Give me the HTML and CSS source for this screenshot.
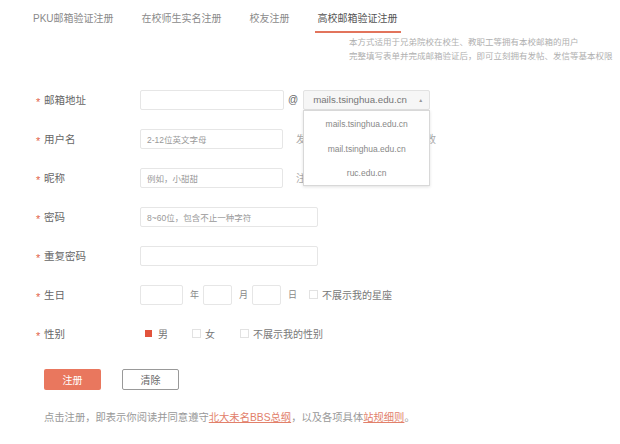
FILE: index.html
```html
<!DOCTYPE html>
<html lang="zh-CN">
<head>
<meta charset="utf-8">
<title>注册</title>
<link rel="stylesheet" href="styles.css">
</head>
<body>
<div class="page">
  <nav class="tabs">
    <span class="tab">PKU邮箱验证注册</span>
    <span class="tab">在校师生实名注册</span>
    <span class="tab">校友注册</span>
    <span class="tab active">高校邮箱验证注册</span>
  </nav>
  <div class="notice">
    <div>本方式适用于兄弟院校在校生、教职工等拥有本校邮箱的用户</div>
    <div>完整填写表单并完成邮箱验证后，即可立刻拥有发帖、发信等基本权限</div>
  </div>

  <form class="form">
    <div class="row">
      <label class="label"><span class="star">*</span>邮箱地址</label>
      <span class="input w144"></span>
      <span class="at">@</span>
      <div class="select">
        <span class="select-value">mails.tsinghua.edu.cn</span>
        <span class="caret">▲</span>
        <div class="menu">
          <div class="menu-item">mails.tsinghua.edu.cn</div>
          <div class="menu-item">mail.tsinghua.edu.cn</div>
          <div class="menu-item">ruc.edu.cn</div>
        </div>
      </div>
    </div>
    <div class="row">
      <label class="label"><span class="star">*</span>用户名</label>
      <span class="input w143"><span class="ph">2-12位英文字母</span></span>
      <span class="hint">发帖时显示的用户名，不可更改</span>
    </div>
    <div class="row">
      <label class="label"><span class="star">*</span>昵称</label>
      <span class="input w143"><span class="ph">例如，小甜甜</span></span>
      <span class="hint">注册后可以随时修改</span>
    </div>
    <div class="row">
      <label class="label"><span class="star">*</span>密码</label>
      <span class="input w178"><span class="ph">8~60位，包含不止一种字符</span></span>
    </div>
    <div class="row">
      <label class="label"><span class="star">*</span>重复密码</label>
      <span class="input w178"></span>
    </div>
    <div class="row">
      <label class="label"><span class="star">*</span>生日</label>
      <span class="input w43"></span><span class="unit">年</span>
      <span class="input w29"></span><span class="unit">月</span>
      <span class="input w29"></span><span class="unit">日</span>
      <span class="check"><span class="box"></span>不展示我的星座</span>
    </div>
    <div class="row">
      <label class="label"><span class="star">*</span>性别</label>
      <div class="gender">
        <span class="opt"><span class="box on"></span>男</span>
        <span class="opt"><span class="box"></span>女</span>
        <span class="opt"><span class="box"></span>不展示我的性别</span>
      </div>
    </div>
    <div class="buttons">
      <span class="btn primary">注册</span>
      <span class="btn plain">清除</span>
    </div>
  </form>

  <p class="footer">点击注册，即表示你阅读并同意遵守<a class="link">北大未名BBS总纲</a>，以及各项具体<a class="link">站规细则</a>。</p>
</div>
</body>
</html>
```

FILE: styles.css
```css
html, body {
  margin: 0;
  padding: 0;
  background: #fff;
}
body {
  font-family: "Liberation Sans", "Noto Sans CJK SC", sans-serif;
  color: #666;
}
.page {
  width: 620px;
  height: 444px;
  overflow: hidden;
}
.tabs {
  display: flex;
  gap: 22px;
  padding: 12px 0 0 30px;
  height: 21px;
}
.tab {
  font-size: 10px;
  line-height: 14px;
  height: 14px;
  padding: 0 3px 5px;
  color: #8a8a8a;
  white-space: nowrap;
}
.tab.active {
  color: #555;
  border-bottom: 2px solid #e2745c;
}
.notice {
  margin: 2px 0 0 349px;
  font-size: 8.5px;
  line-height: 14px;
  color: #b0b0b0;
  white-space: nowrap;
}
.form {
  margin-top: 17px;
}
.row {
  display: flex;
  align-items: center;
  height: 39px;
}
.label {
  width: 104px;
  padding-left: 36px;
  font-size: 10.5px;
  color: #666;
  display: flex;
  align-items: center;
  white-space: nowrap;
}
.star {
  width: 8px;
  color: #e2644a;
  font-size: 11px;
  line-height: 10px;
  transform: translateY(2px);
}
.input {
  box-sizing: border-box;
  height: 20px;
  border: 1px solid #e6e6e6;
  border-radius: 2px;
  display: flex;
  align-items: center;
  padding-left: 6px;
  background: #fff;
}
.w144 { width: 144px; }
.w143 { width: 143px; }
.w178 { width: 178px; }
.w43 { width: 43px; }
.w29 { width: 29px; }
.ph {
  font-size: 8.5px;
  color: #999;
  white-space: nowrap;
}
.at {
  font-size: 10px;
  color: #666;
  margin: 0 5px 0 4px;
}
.select {
  position: relative;
  box-sizing: border-box;
  width: 127px;
  height: 20px;
  background: #f6f6f6;
  border: 1px solid #e2e2e2;
  border-radius: 2px;
  display: flex;
  align-items: center;
  padding: 0 6px 0 9px;
  z-index: 2;
}
.select-value {
  flex: 1;
  font-size: 9.7px;
  color: #777;
}
.caret {
  font-size: 5px;
  color: #999;
}
.menu {
  position: absolute;
  top: 19px;
  left: -1px;
  width: 127px;
  height: 76px;
  box-sizing: border-box;
  background: #fff;
  border: 1px solid #d8d8d8;
  box-shadow: 0 1px 3px rgba(0,0,0,0.12);
  display: flex;
  flex-direction: column;
  justify-content: center;
  padding-top: 3px;
}
.menu-item {
  text-align: center;
  font-size: 8.5px;
  line-height: 24.5px;
  color: #888;
}
.hint {
  margin-left: 13px;
  font-size: 10px;
  color: #aaa;
  white-space: nowrap;
}
.unit {
  font-size: 9px;
  color: #888;
  margin: 0 4px 0 7px;
}
.check, .opt {
  display: flex;
  align-items: center;
  font-size: 10px;
  color: #777;
  white-space: nowrap;
}
.check {
  margin-left: 8px;
}
.box {
  box-sizing: border-box;
  width: 9px;
  height: 9px;
  border: 1px solid #e2e2e2;
  margin-right: 4px;
}
.box.on {
  width: 7px;
  height: 7px;
  border: none;
  background: #e2533c;
  margin-right: 6px;
}
.gender {
  display: flex;
  align-items: center;
  padding-left: 5px;
}
.opt:nth-child(1) { margin-right: 24px; }
.opt:nth-child(2) { margin-right: 25px; }
.buttons {
  display: flex;
  gap: 21px;
  margin: 16px 0 0 44px;
}
.btn {
  box-sizing: border-box;
  width: 57px;
  height: 21px;
  border-radius: 2px;
  display: flex;
  align-items: center;
  justify-content: center;
  font-size: 10px;
}
.btn.primary {
  background: #e9775e;
  color: #fff;
}
.btn.plain {
  border: 1px solid #999;
  color: #666;
  background: #fff;
}
.footer {
  margin: 21px 0 0 44px;
  font-size: 10.3px;
  line-height: 14px;
  color: #999;
  white-space: nowrap;
}
.link {
  color: #e2806a;
  text-decoration: underline;
}
```
